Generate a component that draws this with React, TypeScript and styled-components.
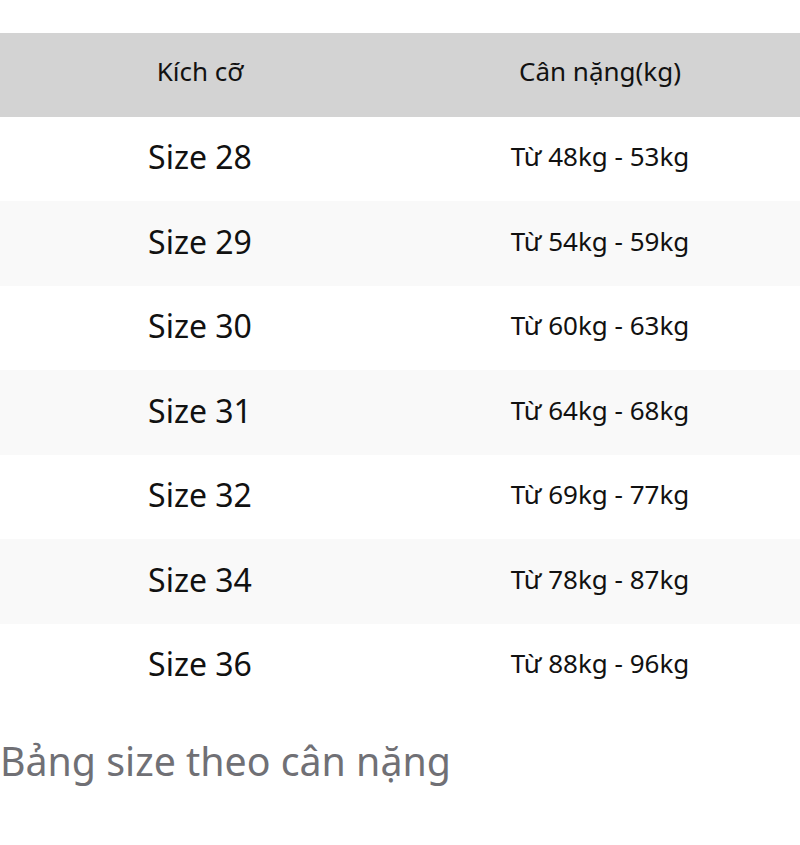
import React from 'react';
import styled, { createGlobalStyle } from 'styled-components';

const GlobalStyle = createGlobalStyle`
  html, body {
    margin: 0;
    padding: 0;
    background: #ffffff;
    font-family: 'Noto Sans', 'Open Sans', sans-serif;
  }
`;

const sizes = [
  { size: 'Size 28', weight: 'Từ 48kg - 53kg' },
  { size: 'Size 29', weight: 'Từ 54kg - 59kg' },
  { size: 'Size 30', weight: 'Từ 60kg - 63kg' },
  { size: 'Size 31', weight: 'Từ 64kg - 68kg' },
  { size: 'Size 32', weight: 'Từ 69kg - 77kg' },
  { size: 'Size 34', weight: 'Từ 78kg - 87kg' },
  { size: 'Size 36', weight: 'Từ 88kg - 96kg' },
];

const App: React.FC = () => {
  return (
    <>
      <GlobalStyle />
      <Page>
        <SizeTable>
          <Caption>Bảng size theo cân nặng</Caption>
          <thead>
            <tr>
              <HeadCell>Kích cỡ</HeadCell>
              <HeadCell>Cân nặng(kg)</HeadCell>
            </tr>
          </thead>
          <tbody>
            {sizes.map((row, index) => (
              <Row key={row.size} $striped={index % 2 === 1}>
                <SizeCell>{row.size}</SizeCell>
                <WeightCell>{row.weight}</WeightCell>
              </Row>
            ))}
          </tbody>
        </SizeTable>
      </Page>
    </>
  );
};

// Styled components
const Page = styled.div`
  padding-top: 32.5px;
  width: 800px;
`;

const SizeTable = styled.table`
  width: 100%;
  border-collapse: collapse;
  table-layout: fixed;
  caption-side: bottom;
`;

const Caption = styled.caption`
  text-align: left;
  padding-top: 26px;
  font-size: 39.3px;
  color: #707075;
`;

const HeadCell = styled.th`
  box-sizing: border-box;
  height: 84px;
  padding: 0 0 8px;
  background-color: #d3d3d3;
  font-size: 26px;
  font-weight: 400;
  color: #111;
  text-align: center;
  vertical-align: middle;
`;

const Row = styled.tr<{ $striped: boolean }>`
  background-color: ${(p) => (p.$striped ? '#f9f9f9' : '#ffffff')};
`;

const SizeCell = styled.td`
  box-sizing: border-box;
  height: 84.5px;
  padding: 0 0 4px;
  font-size: 32px;
  color: #111;
  text-align: center;
  vertical-align: middle;
`;

const WeightCell = styled.td`
  box-sizing: border-box;
  height: 84.5px;
  padding: 0 0 5px;
  font-size: 26px;
  color: #111;
  text-align: center;
  vertical-align: middle;
`;

export default App;
